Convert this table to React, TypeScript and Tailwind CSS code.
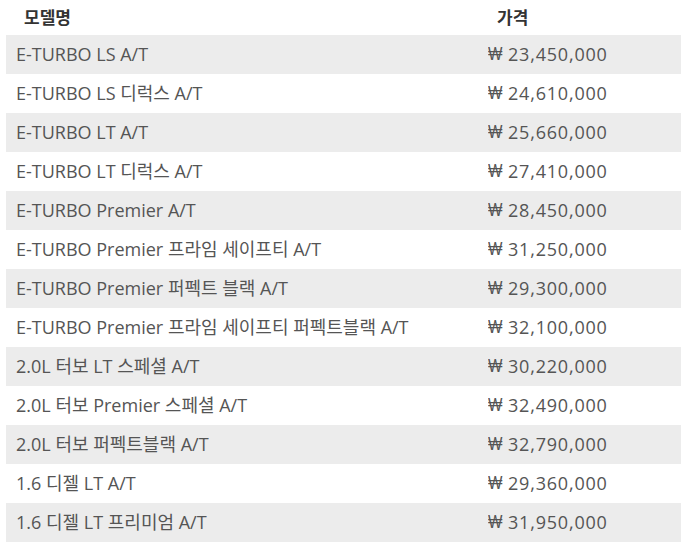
import React from "react";

const rows: [string, string][] = [
  ["E-TURBO LS A/T", "23,450,000"],
  ["E-TURBO LS 디럭스 A/T", "24,610,000"],
  ["E-TURBO LT A/T", "25,660,000"],
  ["E-TURBO LT 디럭스 A/T", "27,410,000"],
  ["E-TURBO Premier A/T", "28,450,000"],
  ["E-TURBO Premier 프라임 세이프티 A/T", "31,250,000"],
  ["E-TURBO Premier 퍼펙트 블랙 A/T", "29,300,000"],
  ["E-TURBO Premier 프라임 세이프티 퍼펙트블랙 A/T", "32,100,000"],
  ["2.0L 터보 LT 스페셜 A/T", "30,220,000"],
  ["2.0L 터보 Premier 스페셜 A/T", "32,490,000"],
  ["2.0L 터보 퍼펙트블랙 A/T", "32,790,000"],
  ["1.6 디젤 LT A/T", "29,360,000"],
  ["1.6 디젤 LT 프리미엄 A/T", "31,950,000"],
];

export default function App() {
  return (
    <div
      className="w-[689px] h-[546px] bg-white pl-[6px] pr-[8px]"
      style={{ fontFamily: '"Open Sans", "Noto Sans CJK KR", sans-serif' }}
    >
      <div className="flex h-[35px] items-center text-[17px] font-bold text-[#333]">
        <div className="w-[472px] pl-[18px]">모델명</div>
        <div className="flex-1 pl-[19px]">가격</div>
      </div>
      {rows.map(([m, p], i) => (
        <div
          key={i}
          className={`flex h-[39px] items-center text-[18px] text-[#555] ${
            i % 2 === 0 ? "bg-[#ececec]" : "bg-white"
          }`}
        >
          <div className="w-[472px] pl-[10px] whitespace-nowrap">{m}</div>
          <div className="flex-1 pl-[10px] whitespace-nowrap flex items-center">
            <span className="font-['Liberation_Sans',sans-serif] w-[15px] inline-block origin-left scale-x-[0.85]">₩</span>
            <span className="ml-[5px] tracking-[0.8px]">{p}</span>
          </div>
        </div>
      ))}
    </div>
  );
}
